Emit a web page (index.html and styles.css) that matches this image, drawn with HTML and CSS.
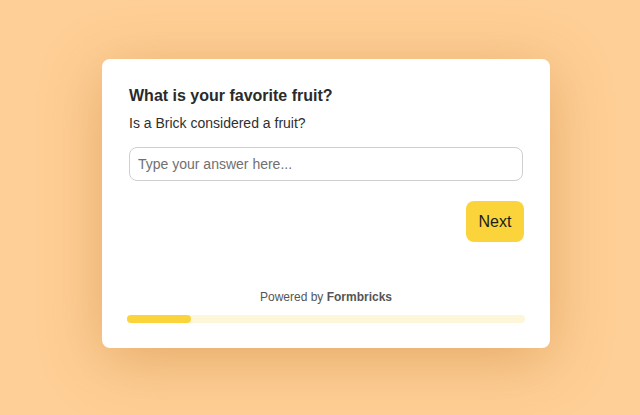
FILE: index.html
```html
<!DOCTYPE html>
<html>
<head>
<meta charset="utf-8">
<link rel="stylesheet" href="styles.css">
</head>
<body>
<div class="stage">
  <div class="card">
    <div class="content">
      <h1 class="title">What is your favorite fruit?</h1>
      <p class="subtitle">Is a Brick considered a fruit?</p>
      <input class="answer" type="text" placeholder="Type your answer here...">
      <div class="actions">
        <button class="next">Next</button>
      </div>
    </div>
    <div class="powered">Powered by <b>Formbricks</b></div>
    <div class="progress"><div class="fill" style="width:16%"></div></div>
  </div>
</div>
</body>
</html>
```

FILE: styles.css
```css
html, body {
  margin: 0;
  padding: 0;
  height: 100%;
}
body {
  background: #fecf96;
  font-family: "Liberation Sans", Arial, sans-serif;
}
.stage {
  padding: 59px 0 0 102px;
}
.card {
  width: 448px;
  box-sizing: border-box;
  padding: 25px 25px 25px 25px;
  background: #fff;
  border-radius: 8px;
  box-shadow: 0 12px 60px rgba(190, 110, 30, 0.38);
}
.content {
  padding: 0 3px 0 2px;
}
.title {
  margin: 0;
  font-size: 16px;
  line-height: 24px;
  font-weight: 700;
  color: #2a2a2a;
}
.subtitle {
  margin: 5px 0 0 0;
  font-size: 14px;
  line-height: 20px;
  color: #2f2f2f;
}
.answer {
  display: block;
  box-sizing: border-box;
  width: 394px;
  height: 34px;
  margin: 14px 0 0 0;
  padding: 0 8px;
  border: 1px solid #cfcfcf;
  border-radius: 8px;
  font-family: inherit;
  font-size: 14px;
  color: #333;
  outline: none;
}
.answer::placeholder {
  color: #707070;
}
.actions {
  display: flex;
  justify-content: flex-end;
  margin-top: 20px;
  margin-right: -2px;
}
.next {
  width: 58px;
  height: 41px;
  border: none;
  border-radius: 8px;
  background: #fbd43b;
  color: #1c1c1c;
  font-family: inherit;
  font-size: 16px;
  padding: 0;
}
.powered {
  margin-top: 47px;
  text-align: center;
  font-size: 12px;
  line-height: 16px;
  color: #555;
}
.powered b {
  color: #555;
}
.progress {
  margin-top: 10px;
  height: 8px;
  border-radius: 4px;
  background: #fef6d8;
}
.fill {
  height: 100%;
  border-radius: 4px;
  background: #fbd43b;
}
```
